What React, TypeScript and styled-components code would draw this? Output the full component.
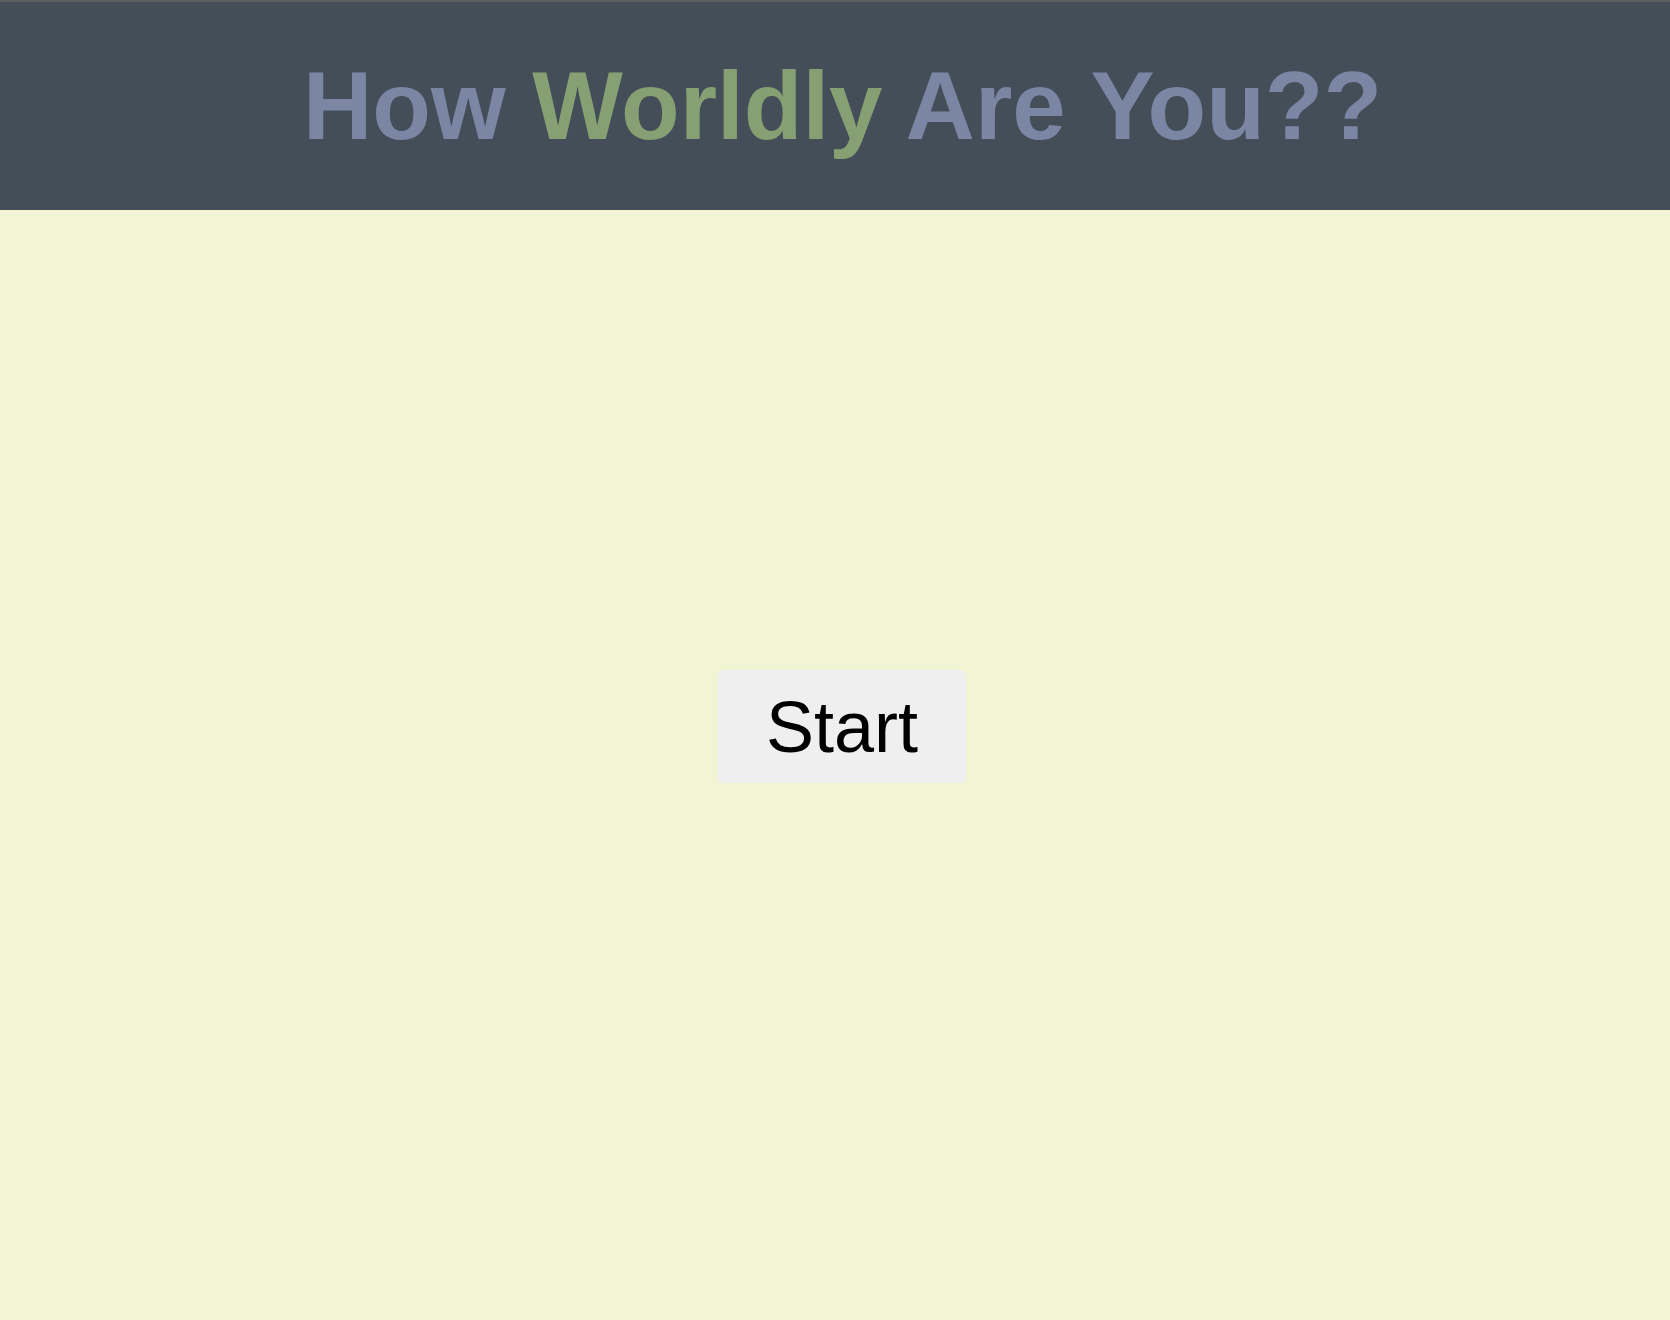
import React from "react";
import styled, { createGlobalStyle } from "styled-components";

const Global = createGlobalStyle`
  html, body { margin: 0; padding: 0; }
  body {
    background: #f1f5d4;
    font-family: "Liberation Sans", Arial, sans-serif;
    min-height: 1320px;
  }
`;

const Page = styled.div`
  min-height: 1320px;
  display: flex;
  flex-direction: column;
  background: #f1f5d4;
`;

const Header = styled.header`
  height: 208px;
  border-top: 2px solid #5d5f61;
  background: #434e58;
  display: flex;
  align-items: center;
  justify-content: center;
  padding-left: 15px;
`;

const Title = styled.h1`
  margin: 0;
  font-family: "Liberation Sans", Arial, sans-serif;
  font-weight: 700;
  font-size: 96px;
  color: #7b85a4;
`;

const Accent = styled.span`
  color: #87a073;
`;

const Main = styled.main`
  display: flex;
  justify-content: center;
  padding-top: 460px;
  padding-left: 14px;
`;

const StartButton = styled.button`
  width: 248px;
  height: 113px;
  border: none;
  border-radius: 5px;
  background: #efefef;
  color: #000;
  font-family: "Liberation Sans", Arial, sans-serif;
  font-size: 72px;
  cursor: pointer;
  padding: 0;
`;

export default function App() {
  return (
    <Page>
      <Global />
      <Header>
        <Title>
          How <Accent>Worldly</Accent> Are You??
        </Title>
      </Header>
      <Main>
        <StartButton>Start</StartButton>
      </Main>
    </Page>
  );
}
